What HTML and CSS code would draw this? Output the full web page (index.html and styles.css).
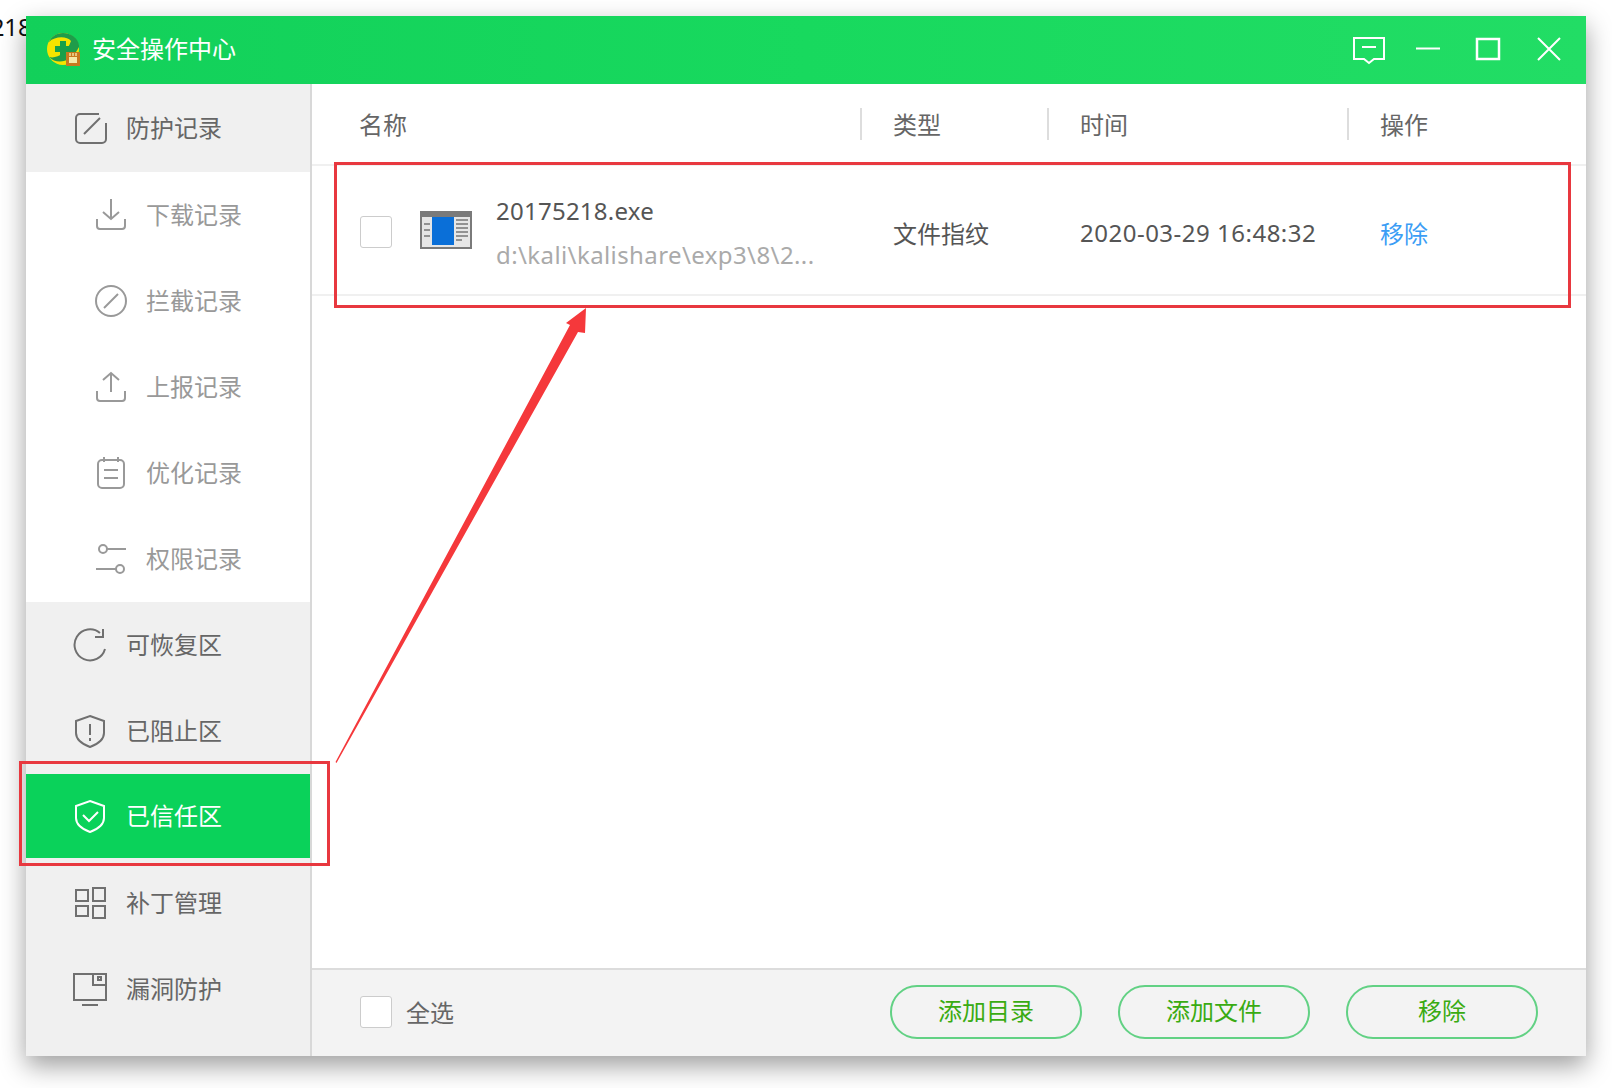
FILE: index.html
```html
<!DOCTYPE html>
<html lang="zh-CN">
<head>
  <meta charset="UTF-8">
  <meta name="viewport" content="width=device-width, initial-scale=1.0">
  <title>安全操作中心</title>
  <link rel="stylesheet" href="styles.css">
</head>
<body>
  <span class="stray-text">20175218</span>

  <div class="window">
    <header class="titlebar">
      <svg class="logo" viewBox="0 0 34 34">
        <circle cx="16" cy="16" r="16" fill="#f5e400"/>
        <path d="M2 24C10 32 24 30 32 14V12C31 5 24 0 16 0C9 0 4 4 2 9C8 3 20 3 24 8C20 20 10 26 2 24Z" fill="#1f9c4a"/>
        <path d="M13 8h6v5h5v6h-5v5h-6v-5H8v-6h5z" fill="#18a04a"/>
        <rect x="19" y="19" width="14" height="14" fill="#c8791f"/>
        <rect x="22" y="24" width="8" height="6" fill="#f6e9a8"/>
        <path d="M23 20v3M26 20v3M29 20v3" stroke="#f6e9a8" stroke-width="1.4"/>
      </svg>
      <span class="title">安全操作中心</span>
      <div class="controls">
        <svg viewBox="0 0 34 34"><path d="M2 5h30v21H22l-5 4-5-4H2z"/><path d="M10 14h14"/></svg>
        <svg viewBox="0 0 34 34"><path d="M4 15.5h24"/></svg>
        <svg viewBox="0 0 34 34"><rect x="5" y="6" width="22" height="20"/></svg>
        <svg viewBox="0 0 34 34"><path d="M6 5l22 22M28 5L6 27"/></svg>
      </div>
    </header>

    <div class="body">
      <nav class="sidebar">
        <a class="nav-item first">
          <svg class="icon" viewBox="0 0 34 34"><path d="M26 3H7a4 4 0 0 0-4 4v21a4 4 0 0 0 4 4h22a4 4 0 0 0 4-4V12"/><path d="M11 23L27 7"/></svg>
          <span class="nav-label">防护记录</span>
        </a>
        <div class="nav-sub">
          <a class="nav-item">
            <svg class="icon" viewBox="0 0 34 34"><path d="M17 1v20M9 14l8 7 8-7"/><path d="M3 21v7a3 3 0 0 0 3 3h22a3 3 0 0 0 3-3v-7"/></svg>
            <span class="nav-label">下载记录</span>
          </a>
          <a class="nav-item">
            <svg class="icon" viewBox="0 0 34 34"><circle cx="17" cy="17" r="15"/><path d="M10 24L24 10"/></svg>
            <span class="nav-label">拦截记录</span>
          </a>
          <a class="nav-item">
            <svg class="icon" viewBox="0 0 34 34"><path d="M17 22V3M9 10l8-7 8 7"/><path d="M3 21v7a3 3 0 0 0 3 3h22a3 3 0 0 0 3-3v-7"/></svg>
            <span class="nav-label">上报记录</span>
          </a>
          <a class="nav-item">
            <svg class="icon" viewBox="0 0 34 34"><rect x="4" y="4" width="26" height="28" rx="4"/><path d="M10 1v5M24 1v5M10 14h14M10 22h14"/></svg>
            <span class="nav-label">优化记录</span>
          </a>
          <a class="nav-item">
            <svg class="icon" viewBox="0 0 34 34"><circle cx="9" cy="7" r="4"/><path d="M13 7h19M2 27h20"/><circle cx="26" cy="27" r="4"/></svg>
            <span class="nav-label">权限记录</span>
          </a>
        </div>
        <a class="nav-item">
          <svg class="icon" viewBox="0 0 34 34"><path d="M32 21A15.5 15.5 0 1 1 27 5"/><path d="M30 1v8h-8"/></svg>
          <span class="nav-label">可恢复区</span>
        </a>
        <a class="nav-item">
          <svg class="icon" viewBox="0 0 34 34"><path d="M17 2l14 5v12c0 6-6 11-14 14C9 30 3 25 3 19V7z"/><path d="M17 10v11M17 24v3"/></svg>
          <span class="nav-label">已阻止区</span>
        </a>
        <a class="nav-item active">
          <svg class="icon" viewBox="0 0 34 34"><path d="M17 2l14 5v12c0 6-6 11-14 14C9 30 3 25 3 19V7z"/><path d="M10 16l6 6 9-9"/></svg>
          <span class="nav-label">已信任区</span>
        </a>
        <a class="nav-item">
          <svg class="icon" viewBox="0 0 34 34"><rect x="3" y="4" width="12" height="11"/><rect x="20" y="2" width="12" height="13"/><rect x="3" y="20" width="12" height="10"/><rect x="20" y="20" width="12" height="12"/></svg>
          <span class="nav-label">补丁管理</span>
        </a>
        <a class="nav-item">
          <svg class="icon" viewBox="0 0 34 34"><path d="M1 2v26h32V2zM20 2v11h13"/><path d="M9 33h16"/><rect x="25" y="5" width="3" height="3"/></svg>
          <span class="nav-label">漏洞防护</span>
        </a>
      </nav>

      <main class="content">
        <div class="table-head">
          <div class="col-name">名称</div>
          <div class="col">类型</div>
          <div class="col">时间</div>
          <div class="col">操作</div>
        </div>

        <div class="table-row">
          <div class="cell-name">
            <span class="checkbox row-check"></span>
            <svg class="file-icon" viewBox="0 0 52 38">
              <rect width="52" height="38" fill="#7a7a7a"/>
              <rect x="2" y="6" width="48" height="30" fill="#e6e6e6"/>
              <rect x="12" y="6" width="22" height="28" fill="#0a6fd8"/>
              <path d="M4 13h6M4 19h6M4 25h6M36 9h12M36 13h12M36 17h12M36 21h12M36 25h12M36 29h6" stroke="#777" stroke-width="1.4"/>
            </svg>
            <div class="file-text">
              <div class="file-name">20175218.exe</div>
              <div class="file-path">d:\kali\kalishare\exp3\8\2...</div>
            </div>
          </div>
          <div class="cell">文件指纹</div>
          <div class="cell time">2020-03-29 16:48:32</div>
          <div class="cell"><a class="link">移除</a></div>
        </div>

        <div class="spacer"></div>

        <footer class="footer">
          <span class="checkbox"></span>
          <span class="select-all">全选</span>
          <div class="buttons">
            <button class="btn">添加目录</button>
            <button class="btn">添加文件</button>
            <button class="btn">移除</button>
          </div>
        </footer>
      </main>
    </div>
  </div>

  <!-- annotations drawn over the screenshot -->
  <div class="mark mark-row"></div>
  <div class="mark mark-nav"></div>
  <svg class="arrow" viewBox="0 0 1612 1088">
    <path d="M335.5 762L570 325L566 323L586 308L585 333L578 332L336.5 763Z" fill="#f5383b"/>
  </svg>
</body>
</html>
```

FILE: styles.css
```css
body {
  margin: 0;
  padding: 16px 0 0 26px;
  box-sizing: border-box;
  min-height: 100vh;
  background: #fff;
  font-family: "Noto Sans", "Noto Sans CJK SC", sans-serif;
  font-size: 24px;
  color: #666;
  overflow: hidden;
}

.stray-text {
  position: absolute;
  left: -78px;
  top: 10px;
  color: #111;
}

.window {
  position: relative;
  width: 1560px;
  height: 1040px;
  display: flex;
  flex-direction: column;
  box-shadow: 0 10px 24px rgba(0, 0, 0, 0.38);
}

.titlebar {
  height: 68px;
  flex: none;
  display: flex;
  align-items: center;
  padding: 0 20px 0 21px;
  background: linear-gradient(90deg, #12d05a, #18d95e 50%, #22dd65);
  color: #fff;
}

.logo {
  width: 34px;
  height: 34px;
  margin-right: 11px;
}

.title {
  line-height: 1;
  margin-bottom: 2px;
}

.controls {
  margin-left: auto;
  display: flex;
  gap: 26px;
}

.controls svg {
  width: 34px;
  height: 34px;
  fill: none;
  stroke: #fff;
  stroke-width: 2;
}

.controls svg:nth-child(3) {
  stroke-width: 2.5;
}

.body {
  flex: 1;
  display: flex;
  min-height: 0;
}

.sidebar {
  width: 284px;
  flex: none;
  background: #f0f0f0;
  border-right: 2px solid #d8d8d8;
}

.nav-item {
  height: 86px;
  display: flex;
  align-items: center;
  padding-left: 47px;
  color: #666;
}

.nav-item.first {
  height: 88px;
}

.nav-item.active {
  height: 84px;
  margin-bottom: 2px;
  background: #0ad25a;
  color: #fff;
}

.nav-label {
  margin-bottom: 4px;
}

.nav-item .icon {
  width: 34px;
  height: 34px;
  margin-right: 19px;
  fill: none;
  stroke: #707070;
  stroke-width: 2;
}

.nav-item.active .icon {
  stroke: #fff;
}

.nav-sub {
  background: #fff;
}

.nav-sub .nav-item {
  padding-left: 68px;
  color: #999;
}

.nav-sub .nav-item .icon {
  margin-right: 18px;
  stroke: #999;
}

.content {
  flex: 1;
  display: flex;
  flex-direction: column;
  min-width: 0;
  background: #fff;
}

.table-head,
.table-row {
  display: grid;
  grid-template-columns: 548px 187px 300px 1fr;
  align-items: center;
  border-bottom: 2px solid #f0f0f0;
}

.table-head {
  height: 80px;
  line-height: 32px;
}

.col-name {
  padding-left: 47px;
  padding-top: 1px;
}

.col {
  height: 32px;
  line-height: 34px;
  padding-left: 31px;
  border-left: 2px solid #ddd;
}

.table-row {
  height: 128px;
  color: #555;
}

.cell {
  padding-left: 33px;
  padding-top: 5px;
}

.time {
  letter-spacing: 0.5px;
}

.cell-name {
  display: flex;
  align-items: center;
  padding-left: 48px;
}

.checkbox {
  width: 30px;
  height: 30px;
  flex: none;
  background: #fff;
  border: 1px solid #ccc;
  border-radius: 3px;
}

.row-check {
  margin-top: 4px;
}

.file-icon {
  width: 52px;
  height: 38px;
  margin: 0 24px 0 28px;
  flex: none;
}

.file-text {
  padding-top: 5px;
}

.file-name {
  line-height: 32px;
  margin-bottom: 12px;
  letter-spacing: 0.25px;
}

.file-path {
  line-height: 32px;
  color: #aaa;
  letter-spacing: 0.4px;
}

.link {
  color: #3b9df5;
}

.spacer {
  flex: 1;
}

.footer {
  height: 86px;
  flex: none;
  display: flex;
  align-items: center;
  padding: 0 48px;
  background: #f3f3f3;
  border-top: 2px solid #dcdcdc;
}

.footer .checkbox {
  margin-bottom: 2px;
}

.select-all {
  margin-left: 14px;
  margin-bottom: 4px;
}

.buttons {
  margin-left: auto;
  margin-bottom: 3px;
  display: flex;
  gap: 36px;
}

.btn {
  width: 192px;
  height: 54px;
  padding: 0 0 4px;
  background: transparent;
  border: 2px solid #62d184;
  border-radius: 27px;
  font: inherit;
  color: #3aab12;
}

.mark {
  position: absolute;
  box-sizing: border-box;
  border: 3px solid #e8383f;
}

.mark-row {
  left: 334px;
  top: 162px;
  width: 1237px;
  height: 146px;
}

.mark-nav {
  left: 19px;
  top: 761px;
  width: 311px;
  height: 105px;
}

.arrow {
  position: absolute;
  left: 0;
  top: 0;
  width: 1612px;
  height: 1088px;
  pointer-events: none;
}
```
